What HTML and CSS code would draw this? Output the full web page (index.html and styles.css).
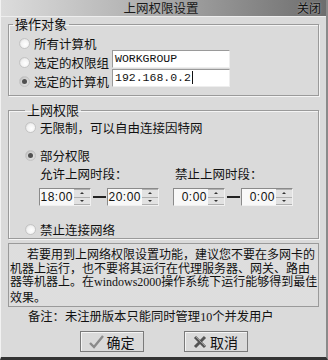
FILE: index.html
```html
<!DOCTYPE html>
<html lang="zh-CN">
<head>
    <meta charset="UTF-8">
    <meta name="viewport" content="width=device-width, initial-scale=1.0">
    <title>上网权限设置</title>
    <link rel="stylesheet" href="styles.css">
</head>
<body>
    <div class="window">
        <div class="titlebar">
            <span class="title">上网权限设置</span>
            <span class="close">关闭</span>
        </div>

        <fieldset class="group target">
            <legend>操作对象</legend>
            <div class="row">
                <span class="radio"></span>
                <span class="label">所有计算机</span>
            </div>
            <div class="row">
                <span class="radio"></span>
                <span class="label wide">选定的权限组</span>
                <span class="field">WORKGROUP</span>
            </div>
            <div class="row">
                <span class="radio checked"></span>
                <span class="label wide">选定的计算机</span>
                <span class="field">192.168.0.2<i class="caret"></i></span>
            </div>
        </fieldset>

        <fieldset class="group access">
            <legend>上网权限</legend>
            <div class="row first">
                <span class="radio"></span>
                <span class="label">无限制，可以自由连接因特网</span>
            </div>
            <div class="row partial">
                <span class="radio checked"></span>
                <span class="label">部分权限</span>
            </div>
            <div class="periods">
                <span class="period-title">允许上网时段：</span>
                <span class="period-title">禁止上网时段：</span>
            </div>
            <div class="spinners">
                <div class="range">
                    <div class="spin"><span class="value">18:00</span><span class="arrows"><b class="up"></b><b class="down"></b></span></div>
                    <span class="dash"></span>
                    <div class="spin"><span class="value">20:00</span><span class="arrows"><b class="up"></b><b class="down"></b></span></div>
                </div>
                <div class="range">
                    <div class="spin"><span class="value">0:00</span><span class="arrows"><b class="up"></b><b class="down"></b></span></div>
                    <span class="dash"></span>
                    <div class="spin"><span class="value">0:00</span><span class="arrows"><b class="up"></b><b class="down"></b></span></div>
                </div>
            </div>
            <div class="row block">
                <span class="radio"></span>
                <span class="label">禁止连接网络</span>
            </div>
        </fieldset>

        <div class="info">
            <p>若要用到上网络权限设置功能，建议您不要在多网卡的<br>机器上运行，也不要将其运行在代理服务器、网关、路由<br>器等机器上。在<span class="latin">windows2000</span>操作系统下运行能够得到最佳<br>效果。</p>
        </div>

        <div class="note">备注：未注册版本只能同时管理<span class="latin">10</span>个并发用户</div>

        <div class="buttons">
            <button class="btn">
                <svg width="15" height="14" viewBox="0 0 15 14"><path d="M1 8 L5 12 L14 1" fill="none" stroke="#8a8a8a" stroke-width="2.4"/></svg>
                确定
            </button>
            <button class="btn">
                <svg width="14" height="14" viewBox="0 0 14 14"><path d="M2 2 L12 12 M12 2 L2 12" stroke="#555" stroke-width="3"/><path d="M3 2 L12 11" stroke="#999" stroke-width="1"/></svg>
                取消
            </button>
        </div>
    </div>
</body>
</html>
```

FILE: styles.css
```css
body {
    margin: 0;
    background-color: #dadada;
    font-family: "Noto Sans CJK SC", "Liberation Sans", sans-serif;
    font-size: 12px;
    color: #111;
}

.window {
    width: 328px;
    height: 360px;
    box-sizing: border-box;
    background-color: #dadada;
    border-left: 1px solid #f2f2f2;
    border-right: 2px solid #8a8a8a;
    border-bottom: 3px solid #333;
    overflow: hidden;
}

.titlebar {
    height: 16px;
    display: flex;
    align-items: center;
    background: linear-gradient(to right, #dcdcdc 0%, #b4b4b4 40%, #8a8a8a 75%, #6e6e6e 100%);
    border-bottom: 1px solid #eeeeee;
}

.title {
    flex: 1;
    text-align: center;
    font-size: 12.5px;
    line-height: 16px;
    color: #1a1a1a;
    padding-left: 24px;
}

.close {
    font-size: 12px;
    line-height: 16px;
    color: #111;
    padding-right: 5px;
    text-shadow: 0 0 2px #bbb;
}

.latin {
    font-family: "Liberation Serif", serif;
    font-size: 12px;
}

.group {
    margin: 0 7px;
    padding: 0 0 0 4px;
    border: 1px solid #9a9a9a;
    box-shadow: 1px 1px 0 #f4f4f4, inset 1px 1px 0 #f4f4f4;
    min-width: 0;
}

.group legend {
    padding: 0 2px;
    font-size: 13px;
    line-height: 14px;
}

.target {
    margin-top: 0;
    padding-top: 3px;
    padding-bottom: 4px;
}

.row {
    height: 19px;
    display: flex;
    align-items: center;
}

.target .row {
    padding-left: 6px;
}

.radio {
    width: 11px;
    height: 11px;
    box-sizing: border-box;
    border-radius: 50%;
    background: radial-gradient(circle at 60% 60%, #ffffff 0%, #f2f2f2 55%, #c8c8c8 100%);
    border: 1px solid #c4c4c4;
    flex: none;
    display: flex;
    align-items: center;
    justify-content: center;
}

.radio.checked {
    background: radial-gradient(circle at 60% 60%, #e8e8e8 0%, #cfcfcf 60%, #9c9c9c 100%);
}

.radio.checked::after {
    content: "";
    width: 5px;
    height: 5px;
    border-radius: 50%;
    background-color: #505050;
}

.label {
    margin-left: 4px;
    font-size: 12.5px;
    white-space: nowrap;
}

.label.wide {
    width: 78px;
}

.field {
    width: 118px;
    height: 18px;
    box-sizing: border-box;
    background-color: #ffffff;
    border: 1px solid #9a9a9a;
    border-right-color: #eeeeee;
    border-bottom-color: #eeeeee;
    font-family: "Liberation Mono", "DejaVu Sans Mono", monospace;
    font-size: 11.5px;
    line-height: 16px;
    padding-left: 2px;
    margin-bottom: 8px;
    display: flex;
    align-items: center;
}

.caret {
    width: 1px;
    height: 13px;
    background-color: #111;
    margin-left: 1px;
}

.access {
    margin-top: 7px;
    padding-left: 16px;
    padding-bottom: 1px;
}

.access .row {
    height: 18px;
    margin-top: 1px;
}

.access .row.partial {
    margin-top: 10px;
}

.periods {
    height: 16px;
    margin-top: 2px;
    padding-left: 15px;
    display: flex;
    font-size: 12.5px;
    line-height: 16px;
}

.period-title {
    width: 135px;
}

.spinners {
    margin-top: 6px;
    padding-left: 14px;
    display: flex;
    gap: 14px;
}

.range {
    display: flex;
    align-items: center;
}

.spin {
    width: 52px;
    height: 18px;
    box-sizing: border-box;
    background-color: #f8f8f8;
    border: 1px solid #8a8a8a;
    border-right-color: #f0f0f0;
    border-bottom-color: #f0f0f0;
    display: flex;
    align-items: center;
}

.value {
    flex: 1;
    text-align: right;
    font-family: "Liberation Sans", sans-serif;
    font-size: 12px;
    letter-spacing: 0.5px;
    padding-right: 1px;
}

.arrows {
    width: 16px;
    height: 16px;
    display: flex;
    flex-direction: column;
}

.arrows b {
    flex: 1;
    display: flex;
    align-items: center;
    justify-content: center;
    background-color: #e2e2e2;
    border-top: 1px solid #b0b0b0;
}

.arrows b.down {
    border-bottom: 1px solid #b0b0b0;
}

.arrows b::after {
    content: "";
    border-left: 2px solid transparent;
    border-right: 2px solid transparent;
}

.arrows .up::after {
    border-bottom: 2px solid #333;
}

.arrows .down::after {
    border-top: 2px solid #333;
}

.dash {
    width: 13px;
    height: 2px;
    background-color: #222;
    margin: 0 1px 0 2px;
}

.access .row.block {
    margin-top: 15px;
    height: 16px;
}

.info {
    margin: 4px 7px 0;
    height: 64px;
    box-sizing: border-box;
    border: 1px solid #9a9a9a;
    background-color: #e6e6e6;
    background-image: radial-gradient(#d2d2d2 0.6px, transparent 0.8px);
    background-size: 2px 2px;
    padding: 3px 0 0 1px;
    overflow: hidden;
}

.info p {
    margin: 0;
    font-size: 12px;
    line-height: 13.5px;
    text-indent: 17px;
    white-space: nowrap;
}

.note {
    margin-top: 2px;
    padding-left: 27px;
    font-size: 12.3px;
    line-height: 14px;
}

.buttons {
    margin-top: 7px;
    display: flex;
    justify-content: center;
    gap: 40px;
}

.btn {
    width: 64px;
    height: 21px;
    box-sizing: border-box;
    background-color: #dadada;
    border: 1px solid #7a7a7a;
    box-shadow: inset 1px 1px 0 #f4f4f4;
    padding: 0;
    font-family: "Noto Sans CJK SC", sans-serif;
    font-size: 14px;
    color: #111;
    display: flex;
    align-items: center;
    justify-content: center;
    gap: 3px;
}
```
